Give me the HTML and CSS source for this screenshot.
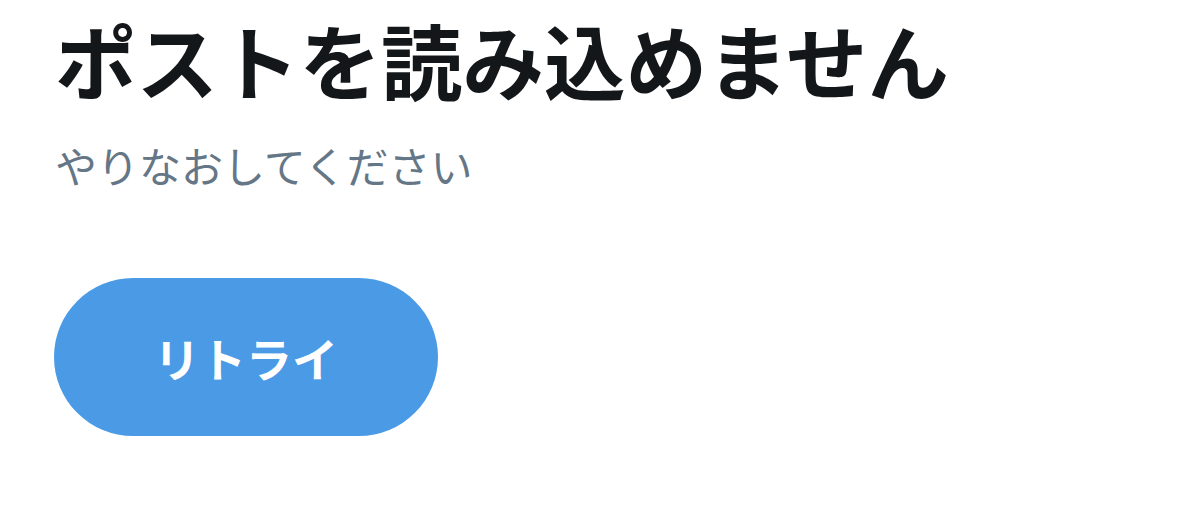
FILE: index.html
```html
<!DOCTYPE html>
<html lang="ja">
<head>
  <meta charset="UTF-8">
  <meta name="viewport" content="width=device-width, initial-scale=1.0">
  <title>ポストを読み込めません</title>
  <link rel="stylesheet" href="styles.css">
</head>
<body>
  <div class="container">
    <h1 class="title">ポストを読み込めません</h1>
    <p class="subtitle">やりなおしてください</p>
    <button class="retry-btn" type="button">リトライ</button>
  </div>
</body>
</html>
```

FILE: styles.css
```css
body {
  font-family: "Noto Sans CJK JP", "Noto Sans", sans-serif;
  margin: 0;
  padding: 0;
  background-color: #ffffff;
  color: #14171a;
}
.container {
  display: flex;
  flex-direction: column;
  align-items: flex-start;
  padding: 14px 0 0 55px;
}
.title {
  margin: 0;
  font-size: 81.5px;
  font-weight: 700;
  line-height: 1.1;
  color: #14171a;
}
.subtitle {
  margin: 36px 0 0 0;
  font-size: 42px;
  line-height: 1.2;
  color: #657786;
}
.retry-btn {
  margin: 88px 0 0 -1px;
  width: 384px;
  height: 158px;
  border: none;
  border-radius: 79px;
  background-color: #4a9ae6;
  color: #ffffff;
  font-family: inherit;
  font-size: 46px;
  font-weight: 700;
  cursor: pointer;
}
```
